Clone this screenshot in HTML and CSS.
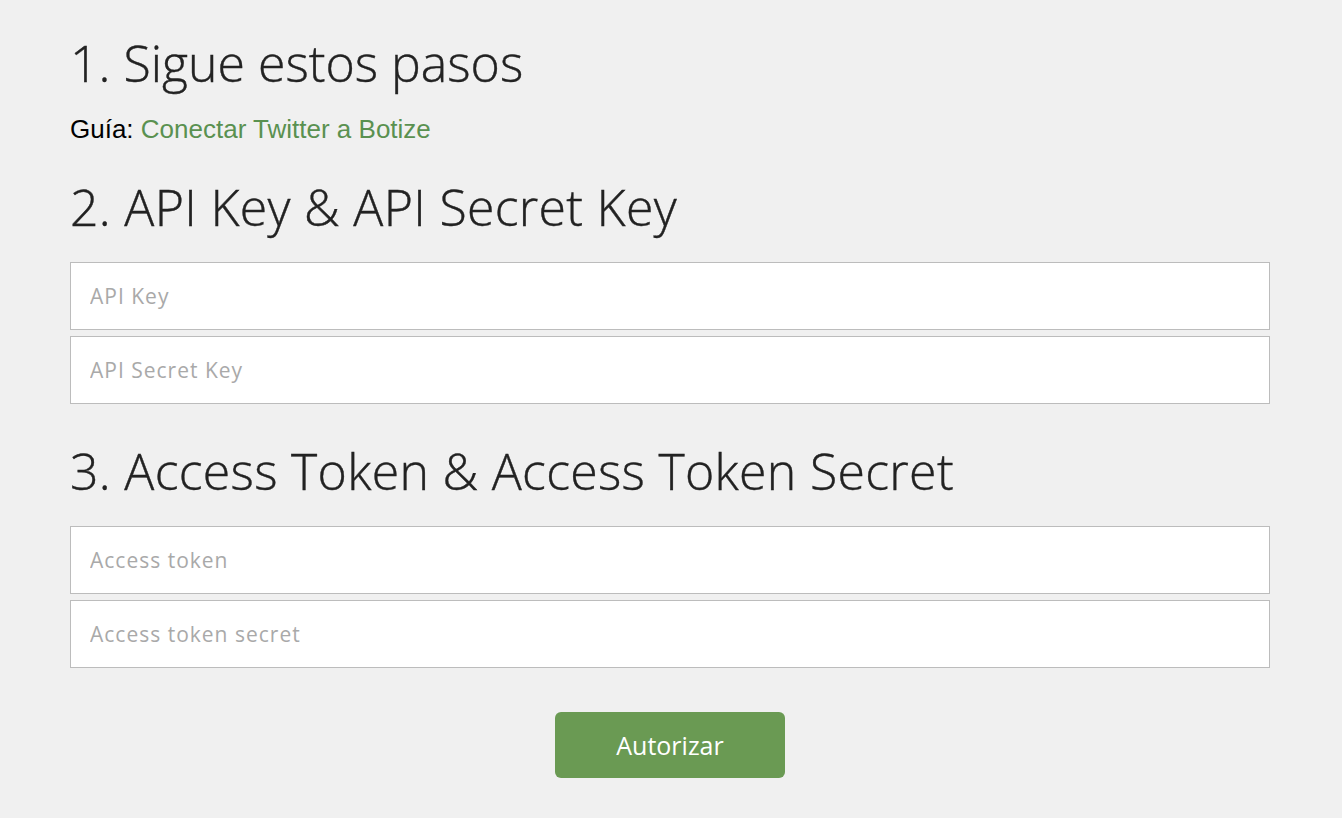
FILE: index.html
```html
<!DOCTYPE html>
<html lang="es">
<head>
<meta charset="utf-8">
<title>Conectar Twitter</title>
<link rel="stylesheet" href="styles.css">
</head>
<body>
<main class="wrap">
  <h2 class="step step-1">1. Sigue estos pasos</h2>
  <p class="guide">Guía: <a href="#" class="guide-link">Conectar Twitter a Botize</a></p>
  <h2 class="step step-2">2. API Key &amp; API Secret Key</h2>
  <div class="fields">
    <input class="field" type="text" placeholder="API Key">
    <input class="field" type="text" placeholder="API Secret Key">
  </div>
  <h2 class="step step-3">3. Access Token &amp; Access Token Secret</h2>
  <div class="fields">
    <input class="field" type="text" placeholder="Access token">
    <input class="field" type="text" placeholder="Access token secret">
  </div>
  <div class="actions">
    <button class="btn" type="button">Autorizar</button>
  </div>
</main>
</body>
</html>
```
FILE: styles.css
```css
html, body {
  margin: 0;
  padding: 0;
  background: #f0f0f0;
}
body {
  font-family: "Open Sans", "Noto Sans", sans-serif;
  color: #222;
}
.wrap {
  width: 1200px;
  margin-left: calc(50% - 601px);
  padding-top: 30px;
}
.step {
  font-weight: 300;
  font-size: 50px;
  line-height: 66px;
  margin: 0;
  letter-spacing: 0;
  -webkit-text-stroke: 0.4px #222;
  color: #222;
}
.step-2,
.step-3 {
  letter-spacing: 0.3px;
}
.guide {
  font-family: "Liberation Sans", Arial, sans-serif;
  font-size: 26px;
  margin: 19px 0 31px;
  line-height: 28px;
  color: #000;
}
.guide-link {
  color: #5a9150;
  text-decoration: none;
}
.fields {
  display: flex;
  flex-direction: column;
  gap: 6px;
  margin-top: 22px;
}
.step-3 {
  margin-top: 34px;
}
.field {
  box-sizing: border-box;
  width: 1200px;
  height: 68px;
  border: 1px solid #bcbcbc;
  background: #fff;
  padding: 0 19px;
  font-family: "Open Sans", "Noto Sans", sans-serif;
  font-size: 21px;
  letter-spacing: 1px;
  margin: 0;
  outline: none;
}
.field::placeholder {
  color: #a9a9a9;
}
.actions {
  display: flex;
  justify-content: center;
  margin-top: 44px;
}
.btn {
  width: 230px;
  height: 66px;
  border: none;
  border-radius: 6px;
  background: #6a9a53;
  color: #fff;
  font-family: "Open Sans", "Noto Sans", sans-serif;
  font-size: 25px;
  font-weight: 400;
}
```
